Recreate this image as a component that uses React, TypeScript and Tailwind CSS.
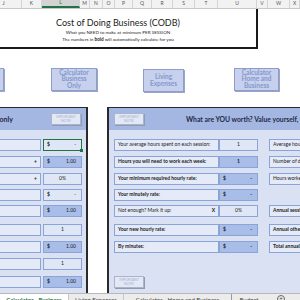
const cols = [
  { l: "J", w: "w-[36px] -ml-[14px]" },
  { l: "K", w: "w-[20px]" },
  { l: "L", w: "w-[38px]", sel: true },
  { l: "M", w: "w-[10px]" },
  { l: "N", w: "w-[13px]" },
  { l: "O", w: "w-[12px]" },
  { l: "P", w: "w-[18px]" },
  { l: "Q", w: "w-[19px]" },
  { l: "R", w: "w-[21px]" },
  { l: "S", w: "w-[22px]" },
  { l: "T", w: "w-[23px]" },
  { l: "U", w: "w-[39px]" },
  { l: "V", w: "w-[11px]" },
  { l: "W", w: "w-[22px]" },
  { l: "X", w: "w-[10px]" },
];

function ImportantNote() {
  return (
    <div className="w-[30px] h-[12px] bg-[#e3e8f5] border border-[#aab4cc] shadow-[1px_1px_0_#8f9ab5] flex flex-col items-center justify-center leading-[4px] text-[3.5px] text-[#a6b1cc] tracking-tight">
      <span>IMPORTANT</span>
      <span>NOTE!</span>
    </div>
  );
}

function NavButton({ lines, className }: { lines: string[]; className: string }) {
  return (
    <div
      className={`h-[23px] bg-[#c7d0ec] border border-[#8e9dcc] shadow-[1px_1px_0_#9aa6c8] flex flex-col items-center justify-center text-[6.5px] leading-[6.5px] font-bold text-[#8598cc] ${className}`}
    >
      {lines.map((t) => (
        <span key={t}>{t}</span>
      ))}
    </div>
  );
}

function Value({ v, dark, bold, sel }: { v: string; dark?: boolean; bold?: boolean; sel?: boolean }) {
  const money = v.startsWith("$");
  return (
    <div
      className={`relative w-[39px] h-[12px] flex items-center text-[5px] text-[#222] ${bold ? "font-bold" : ""} ${
        dark ? "bg-[#a8bde8]" : "bg-[#dfe6f6]"
      } ${sel ? "border border-[#217346]" : "border border-[#8ba4d8]"} ${money ? "justify-between px-[3px]" : "justify-center"}`}
    >
      {money ? (
        <>
          <span className="font-bold">$</span>
          <span className="pr-[2px]">{v.slice(1).trim()}</span>
        </>
      ) : (
        <span>{v}</span>
      )}
      {sel && <span className="absolute -right-[2px] -bottom-[2px] w-[3px] h-[3px] bg-[#217346]" />}
    </div>
  );
}

function Label({ text, bold, mark, className }: { text: string; bold?: boolean; mark?: string; className: string }) {
  return (
    <div
      className={`h-[12px] bg-[#e4eaf8] border border-[#8ba4d8] flex items-center justify-between px-[3px] text-[5px] text-[#222] whitespace-nowrap overflow-hidden ${
        bold ? "font-bold" : ""
      } ${className}`}
    >
      <span>{text}</span>
      {mark && <span className="font-bold">{mark}</span>}
    </div>
  );
}

const leftRows = [
  { v: "$ -", sel: true, mt: "mt-[9px]" },
  { v: "$ 1.00", dark: true, mark: "+", mt: "mt-[5px]" },
  { v: "0%", mark: "+", mt: "mt-[5px]" },
  { v: "$ -", mt: "mt-[4px]" },
  { v: "$ 1.00", dark: true, mt: "mt-[4px]" },
  { v: "1", mt: "mt-[7px]" },
  { v: "$ 1.00", dark: true, mt: "mt-[5px]" },
  { v: "1", mt: "mt-[5px]" },
  { v: "$ 1.00", dark: true, mt: "mt-[6px]" },
];

const rightRows = [
  { t: "Your average hours spent on each session:", v: "1", side: "Average hours worked per day:", mt: "mt-[9px]" },
  { t: "Hours you will need to work each week:", v: "1", dark: true, bold: true, side: "Number of days worked:", mt: "mt-[5px]" },
  { t: "Your minimum required hourly rate:", v: "$ -", dark: true, bold: true, side: "Hours worked per year:", mt: "mt-[5px]" },
  { t: "Your minutely rate:", v: "$ -", dark: true, bold: true, mt: "mt-[4px]" },
  { t: "Not enough? Mark it up:", v: "0%", mark: "X", side: "Annual sessions:", sideBold: true, mt: "mt-[4px]" },
  { t: "Your new hourly rate:", v: "$ -", dark: true, bold: true, side: "Annual other expenses:", sideBold: true, mt: "mt-[7px]" },
  { t: "By minutes:", v: "$ -", dark: true, bold: true, side: "Total annual hours:", sideBold: true, mt: "mt-[5px]" },
];

export default function App() {
  return (
    <div className="w-[300px] h-[300px] overflow-hidden bg-white font-['Lato','Liberation_Sans',sans-serif] flex flex-col">
      {/* column headers */}
      <div className="h-[9px] shrink-0 flex bg-[#f2f2f2] border-b border-[#c8c8c8] text-[5px] text-[#555]">
        {cols.map((c) => (
          <div
            key={c.l}
            className={`${c.w} shrink-0 flex items-center justify-center border-r border-[#d4d4d4] ${
              c.sel ? "bg-[#d3d3d3] border-b-2 border-b-[#217346] text-[#217346]" : ""
            }`}
          >
            {c.l}
          </div>
        ))}
      </div>

      {/* title */}
      <div className="-ml-[20px] w-[278px] h-[40px] shrink-0 border-r-2 border-b-2 border-[#1a1a1a] flex flex-col items-center pt-[8px] text-[#222]">
        <div className="text-[9px] leading-[11px]">Cost of Doing Business (CODB)</div>
        <div className="text-[4.6px] leading-[7px] mt-[1px]">What you NEED to make at minimum PER SESSION</div>
        <div className="text-[4.6px] leading-[7px]">
          The numbers in <span className="font-bold">bold</span> will automatically calculate for you
        </div>
      </div>

      {/* nav buttons */}
      <div className="mt-[19px] h-[24px] shrink-0 flex items-start">
        <NavButton lines={["Instructions"]} className="-ml-[40px] w-[44px]" />
        <NavButton lines={["Calculator", "Business", "Only"]} className="ml-[47px] w-[46px]" />
        <NavButton lines={["Living", "Expenses"]} className="ml-[46px] w-[41px] mt-[1px] h-[21px]" />
        <NavButton lines={["Calculator", "Home and", "Business"]} className="ml-[50px] w-[45px]" />
      </div>

      {/* panels */}
      <div className="mt-[15px] h-[186px] shrink-0 flex">
        <div className="-ml-[30px] w-[118px] shrink-0 flex flex-col border-t border-r-2 border-[#2a2a2a] bg-[#d9e1f3]">
          <div className="h-[22px] shrink-0 bg-[#a3b7e2] flex items-center">
            <div className="w-[43px] flex justify-end whitespace-nowrap text-[7px] font-bold text-[#1f2a44]">
              Calculator - Business only
            </div>
            <div className="ml-[38px]">
              <ImportantNote />
            </div>
          </div>
          <div className="flex flex-col">
            {leftRows.map((r, i) => (
              <div key={i} className={`flex ${r.mt}`}>
                <Label text="" mark={r.mark} className="w-[71px]" />
                <div className="ml-[2px]">
                  <Value v={r.v} dark={r.dark} sel={r.sel} />
                </div>
              </div>
            ))}
          </div>
        </div>

        <div className="ml-[19px] w-[240px] shrink-0 flex flex-col border-t border-l-2 border-[#2a2a2a] bg-[#d9e1f3]">
          <div className="h-[22px] shrink-0 bg-[#a3b7e2] flex items-center pl-[5px]">
            <ImportantNote />
            <div className="ml-[42px] whitespace-nowrap text-[6.8px] font-bold text-[#1f2a44]">
              What are YOU worth? Value yourself, your time
            </div>
          </div>
          <div className="flex flex-col pl-[5px]">
            {rightRows.map((r, i) => (
              <div key={i} className={`flex ${r.mt}`}>
                <Label text={r.t} bold={r.bold} mark={r.mark} className="w-[105px]" />
                <Value v={r.v} dark={r.dark} bold={r.bold} />
                {r.side && <Label text={r.side} bold={r.sideBold} className="ml-[11px] w-[70px]" />}
              </div>
            ))}
            <div className="mt-[23px]">
              <ImportantNote />
            </div>
          </div>
        </div>
      </div>

      {/* sheet tabs */}
      <div className="h-[20px] shrink-0 flex items-start bg-[#ececec] border-t border-[#b8b8b8] text-[6px] text-[#444] whitespace-nowrap">
        <div className="w-[69px] h-full bg-white pt-[1px] font-bold text-[#217346] border-r border-[#c6c6c6] flex justify-center">
          Calculator - Business
        </div>
        <div className="w-[55px] pt-[1px] flex justify-center border-r border-[#c6c6c6]">Living Expenses</div>
        <div className="w-[108px] pt-[1px] flex justify-center border-r border-[#9a9a9a]">
          Calculator - Home and Business
        </div>
        <div className="w-[34px] pt-[1px] flex justify-center">Budget</div>
        <div className="ml-[11px] mt-[1px] w-[8px] h-[8px] rounded-full border border-[#666] flex items-center justify-center text-[6px] leading-none">
          +
        </div>
      </div>
    </div>
  );
}
